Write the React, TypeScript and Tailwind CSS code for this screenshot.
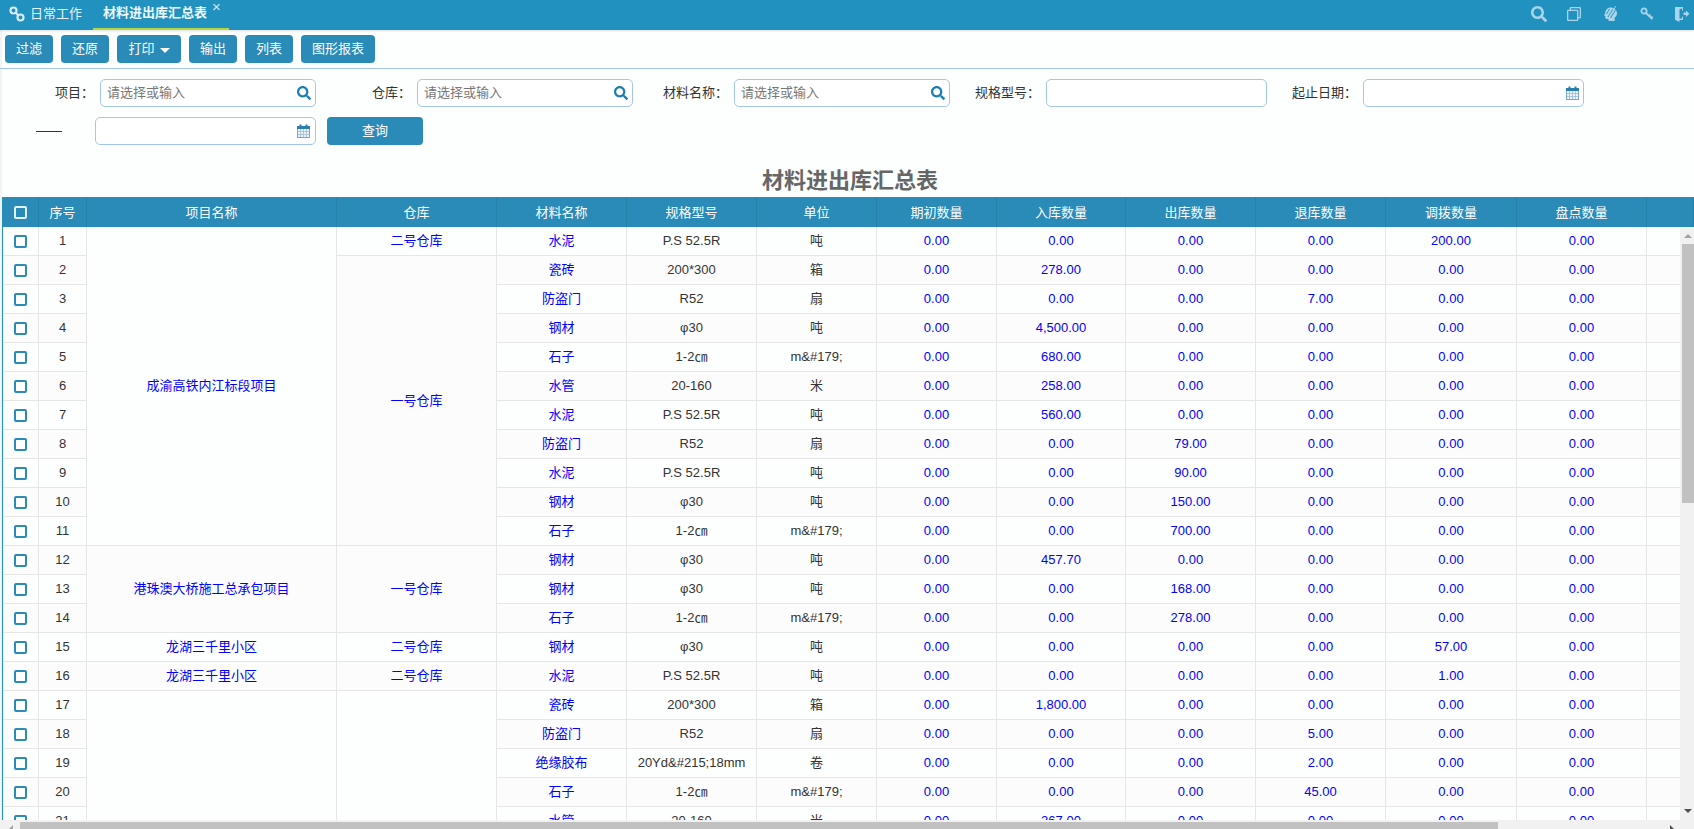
import { FaSearch, FaRegClone } from 'react-icons/fa';

interface Cell {
  text: string;
  span: number;
}

interface Row {
  project?: Cell;
  store?: Cell;
  material: string;
  spec: string;
  unit: string;
  // 期初 入库 出库 退库 调拨 盘点
  values: string[];
}

const zero = '0.00';

const mk = (
  material: string,
  spec: string,
  unit: string,
  col: number,
  val: string,
  project?: Cell,
  store?: Cell,
): Row => {
  const values = [zero, zero, zero, zero, zero, zero];
  if (col >= 0) values[col] = val;
  return { material, spec, unit, values, project, store };
};

const rows: Row[] = [
  mk('水泥', 'P.S 52.5R', '吨', 4, '200.00', { text: '成渝高铁内江标段项目', span: 11 }, { text: '二号仓库', span: 1 }),
  mk('瓷砖', '200*300', '箱', 1, '278.00', undefined, { text: '一号仓库', span: 10 }),
  mk('防盗门', 'R52', '扇', 3, '7.00'),
  mk('钢材', 'φ30', '吨', 1, '4,500.00'),
  mk('石子', '1-2㎝', 'm&#179;', 1, '680.00'),
  mk('水管', '20-160', '米', 1, '258.00'),
  mk('水泥', 'P.S 52.5R', '吨', 1, '560.00'),
  mk('防盗门', 'R52', '扇', 2, '79.00'),
  mk('水泥', 'P.S 52.5R', '吨', 2, '90.00'),
  mk('钢材', 'φ30', '吨', 2, '150.00'),
  mk('石子', '1-2㎝', 'm&#179;', 2, '700.00'),
  mk('钢材', 'φ30', '吨', 1, '457.70', { text: '港珠澳大桥施工总承包项目', span: 3 }, { text: '一号仓库', span: 3 }),
  mk('钢材', 'φ30', '吨', 2, '168.00'),
  mk('石子', '1-2㎝', 'm&#179;', 2, '278.00'),
  mk('钢材', 'φ30', '吨', 4, '57.00', { text: '龙湖三千里小区', span: 1 }, { text: '二号仓库', span: 1 }),
  mk('水泥', 'P.S 52.5R', '吨', 4, '1.00', { text: '龙湖三千里小区', span: 1 }, { text: '二号仓库', span: 1 }),
  mk('瓷砖', '200*300', '箱', 1, '1,800.00', { text: '', span: 5 }, { text: '', span: 5 }),
  mk('防盗门', 'R52', '扇', 3, '5.00'),
  mk('绝缘胶布', '20Yd&#215;18mm', '卷', 3, '2.00'),
  mk('石子', '1-2㎝', 'm&#179;', 3, '45.00'),
  mk('水管', '20-160', '米', 1, '267.00'),
];

const colWidths = [36, 48, 250, 160, 130, 130, 120, 120, 129, 130, 130, 131, 130, 47];
const headers = ['序号', '项目名称', '仓库', '材料名称', '规格型号', '单位', '期初数量', '入库数量', '出库数量', '退库数量', '调拨数量', '盘点数量', ''];

function LinkIcon() {
  return (
    <svg width="16" height="16" viewBox="0 0 16 16" fill="none" stroke="#d6ecf7" strokeWidth="2.2">
      <circle cx="4.500" cy="4.500" r="3" />
      <circle cx="11.500" cy="11.500" r="3" />
      <path d="M6.500 6.500l3 3" />
    </svg>
  );
}

function HeadIcon() {
  return (
    <svg width="15" height="16" viewBox="0 0 15 16">
      <path d="M7.500 1.500C11 1.500 14 4 14 7.200c0 2-1 3.300-2.300 4.300V15H5.500v-2H3.500c-.8 0-1.200-.6-1.200-1.200V10L1 9.500l1.200-2.300C2.200 4 4.500 1.500 7.500 1.500z" fill="#a8d5ea" />
      <path d="M5 11l5-8M7.500 12l5-8M3.500 8l3-5" stroke="#2191c0" strokeWidth="0.9" />
      <path d="M10 4l3-4" stroke="#a8d5ea" strokeWidth="1" />
    </svg>
  );
}

function KeyIcon() {
  return (
    <svg width="14" height="14" viewBox="0 0 14 14" fill="none" stroke="#a8d5ea">
      <circle cx="4" cy="4" r="2.600" strokeWidth="1.800" />
      <path d="M6 6l6.500 6" strokeWidth="2" />
      <path d="M9 9.200l1.600-1.600M11 11l1.600-1.600" strokeWidth="1.400" />
    </svg>
  );
}

function DoorIcon() {
  return (
    <svg width="16" height="16" viewBox="0 0 16 16" fill="#a8d5ea">
      <path d="M1 1h8v3.500H8V2.300L5.500 3.500v9H8v-2h1V14H5.500v2L1 13.800z" />
      <path d="M9.500 6.500H12V4.500L15.500 7.800 12 11V9H9.500z" />
    </svg>
  );
}

function CalendarIcon() {
  return (
    <svg width="13" height="14" viewBox="0 0 13 14" className="shrink-0">
      <rect x="0.500" y="2.500" width="12" height="11" fill="#eaf3fa" stroke="#7aa7c9" />
      <rect x="0" y="2" width="13" height="3" fill="#2a7fb0" />
      <rect x="2.500" y="0.500" width="2" height="3" fill="#2a7fb0" />
      <rect x="8.500" y="0.500" width="2" height="3" fill="#2a7fb0" />
      <path d="M3.500 5v8M6.500 5v8M9.500 5v8M1 7.500h11M1 10.500h11" stroke="#9dbdd6" strokeWidth="0.8" />
    </svg>
  );
}

function Box({ header }: { header?: boolean }) {
  return (
    <span
      className={`mx-auto block h-[13px] w-[13px] rounded-[2px] border-2 ${
        header ? 'border-[#e3f1f8] bg-[#2a8ab8]' : 'border-[#2a8ab8] bg-white'
      }`}
    />
  );
}

function Field({ label, labelWidth, inputWidth, placeholder, icon }: { label: string; labelWidth: string; inputWidth: string; placeholder?: string; icon?: 'search' | 'date' }) {
  return (
    <>
      <label className={`${labelWidth} shrink-0 pr-[6px] text-right text-[13px] text-[#333]`}>{label}：</label>
      <div className={`${inputWidth} flex h-[28px] shrink-0 items-center rounded-[5px] border border-[#a3c8e3] bg-white pl-[6px] pr-[4px]`}>
        <input
          placeholder={placeholder}
          className="min-w-0 flex-1 bg-transparent text-[13px] outline-none placeholder:text-[#777]"
        />
        {icon === 'search' && <FaSearch className="shrink-0 text-[14px] text-[#1a7fb0]" />}
        {icon === 'date' && <CalendarIcon />}
      </div>
    </>
  );
}

const toolBtn = 'flex h-[28px] items-center justify-center rounded-[4px] bg-[#2a8ab8] text-[13px] text-white';

export default function App() {
  return (
    <div className="h-[829px] w-[1694px] overflow-hidden bg-[#fdfefe] shadow-[inset_2px_0_0_#f1f3f4] font-['Liberation_Sans','Noto_Sans_CJK_SC',sans-serif]">
      {/* Top tab bar */}
      <div className="flex h-[30px] items-start bg-[#2191c0] shadow-[0_1px_2px_rgba(0,0,0,0.12)]">
        <div className="flex h-[28px] w-[93px] items-center gap-[5px] pl-[9px] text-[13px] text-[#e8f4fa]">
          <LinkIcon />
          <span>日常工作</span>
        </div>
        <div className="relative flex h-[30px] w-[136px] items-start border-b-2 border-[#b5d63a] pl-[10px] pt-[3px] text-[13px] font-bold text-[#eef7fb]">
          材料进出库汇总表
          <span className="absolute left-[119px] top-[1px] text-[15px] font-normal leading-[12px] text-[#cfe6f2]">×</span>
        </div>
        <div className="ml-auto flex h-[28px] items-center pr-[4px]">
          <FaSearch className="mr-[20px] text-[16px] text-[#a8d5ea]" />
          <FaRegClone className="mr-[22px] rotate-180 text-[14px] text-[#a8d5ea]" />
          <span className="mr-[22px]"><HeadIcon /></span>
          <span className="mr-[20px]"><KeyIcon /></span>
          <DoorIcon />
        </div>
      </div>

      {/* Toolbar */}
      <div className="flex h-[39px] items-start gap-[8px] border-b border-[#a3c8e3] pl-[5px] pt-[5px]">
        <button className={`${toolBtn} w-[48px]`}>过滤</button>
        <button className={`${toolBtn} w-[48px]`}>还原</button>
        <button className={`${toolBtn} w-[64px] gap-[5px]`}>
          打印
          <span className="mt-[2px] h-0 w-0 border-x-[5px] border-t-[5px] border-x-transparent border-t-white" />
        </button>
        <button className={`${toolBtn} w-[48px]`}>输出</button>
        <button className={`${toolBtn} w-[48px]`}>列表</button>
        <button className={`${toolBtn} w-[74px]`}>图形报表</button>
      </div>

      {/* Filter form */}
      <div className="mt-[10px] flex h-[28px] items-center">
        <Field label="项目" labelWidth="w-[100px]" inputWidth="w-[216px]" placeholder="请选择或输入" icon="search" />
        <Field label="仓库" labelWidth="w-[101px]" inputWidth="w-[216px]" placeholder="请选择或输入" icon="search" />
        <Field label="材料名称" labelWidth="w-[101px]" inputWidth="w-[216px]" placeholder="请选择或输入" icon="search" />
        <Field label="规格型号" labelWidth="w-[96px]" inputWidth="w-[221px]" />
        <Field label="起止日期" labelWidth="w-[96px]" inputWidth="w-[221px]" icon="date" />
      </div>
      <div className="mt-[10px] flex h-[28px] items-center">
        <div className="ml-[36px] w-[59px] shrink-0">
          <div className="h-px w-[26px] bg-[#333]" />
        </div>
        <div className="flex h-[28px] w-[221px] shrink-0 items-center justify-end rounded-[5px] border border-[#a3c8e3] bg-white pr-[5px]">
          <CalendarIcon />
        </div>
        <button className={`${toolBtn} ml-[11px] w-[96px]`}>查询</button>
      </div>

      <h1 className="mt-[19px] h-[33px] pl-[6px] text-center text-[22px] font-bold leading-[33px] text-[#666]">材料进出库汇总表</h1>

      {/* Table */}
      <div className="relative ml-[2px] h-[623px] overflow-hidden border-l border-[#2191c0]">
        <table className="w-[1691px] table-fixed border-separate border-spacing-0 text-center text-[13px] text-[#333]">
          <colgroup>
            {colWidths.map((w, i) => (
              <col key={i} style={{ width: w }} />
            ))}
          </colgroup>
          <thead>
            <tr className="h-[30px] bg-[#2a8ab8] text-white">
              <th className="border-r border-t border-[#2580aa] border-t-[#2191c0] font-normal"><Box header /></th>
              {headers.map((h, i) => (
                <th key={i} className="border-r border-t border-[#2580aa] border-t-[#2191c0] font-normal">{h}</th>
              ))}
            </tr>
          </thead>
          <tbody>
            {rows.map((r, i) => {
              const bg = i % 2 === 0 ? 'bg-[#fdfefe]' : 'bg-[#fdfcfd]';
              const td = 'h-[29px] border-b border-r border-[#e6e6e6] p-0';
              return (
                <tr key={i} className={bg}>
                  <td className={td}><Box /></td>
                  <td className={td}>{i + 1}</td>
                  {r.project && <td rowSpan={r.project.span} className={`${td} text-[#0000ff]`}>{r.project.text}</td>}
                  {r.store && <td rowSpan={r.store.span} className={`${td} text-[#0000ff]`}>{r.store.text}</td>}
                  <td className={`${td} text-[#0000ff]`}>{r.material}</td>
                  <td className={td}>{r.spec}</td>
                  <td className={td}>{r.unit}</td>
                  {r.values.map((v, j) => (
                    <td key={j} className={`${td} text-[#0000ff]`}>{v}</td>
                  ))}
                  <td className={td} />
                </tr>
              );
            })}
          </tbody>
        </table>

        {/* Vertical scrollbar */}
        <div className="absolute bottom-0 right-0 top-[30px] flex w-[14px] flex-col items-end bg-[#f1f1f1]">
          <div className="mr-[2px] mt-[7px] h-0 w-0 border-x-[4px] border-b-[4px] border-x-transparent border-b-[#a3a3a3]" />
          <div className="mt-[6px] h-[259px] w-[12px] bg-[#c1c1c1]" />
          <div className="mr-[2px] mt-auto mb-[7px] h-0 w-0 border-x-[4px] border-t-[4px] border-x-transparent border-t-[#505050]" />
        </div>
      </div>

      {/* Horizontal scrollbar */}
      <div className="flex h-[9px] bg-[#f1f1f1] pt-[2px]">
        <div className="ml-[9px] mt-[3px] h-0 w-0 border-b-[4px] border-l-[4px] border-b-[#a3a3a3] border-l-transparent" />
        <div className="ml-[7px] h-[7px] w-[1478px] bg-[#c1c1c1]" />
        <div className="ml-[172px] mt-[3px] h-0 w-0 border-b-[4px] border-r-[4px] border-b-[#505050] border-r-transparent" />
      </div>
    </div>
  );
}
